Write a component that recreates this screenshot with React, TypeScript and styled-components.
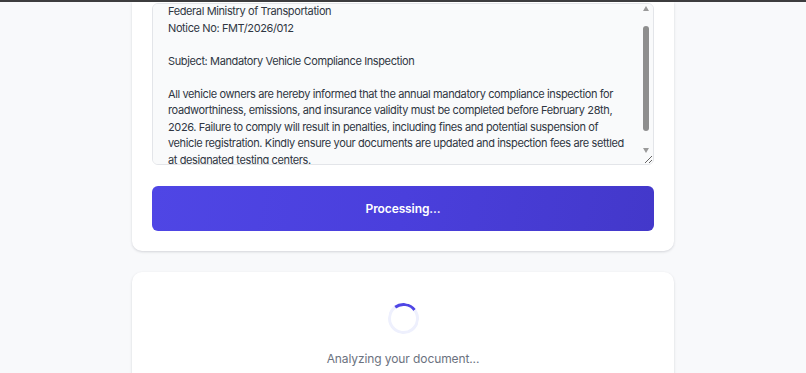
import React, { useLayoutEffect, useRef } from 'react';
import styled, { createGlobalStyle, keyframes } from 'styled-components';

const GlobalStyle = createGlobalStyle`
  html, body {
    margin: 0;
    padding: 0;
    height: 100%;
    overflow: hidden;
    background-color: #f8f9fb;
    font-family: Inter, 'Noto Sans', 'Liberation Sans', sans-serif;
  }
  * {
    box-sizing: border-box;
  }
`;

const TopEdge = styled.div`
  height: 2px;
  background-color: #3d3d3f;
`;

const Page = styled.main`
  display: flex;
  flex-direction: column;
  gap: 21px;
  width: 542px;
  margin: 0 auto;
`;

const Card = styled.section<{ $clipped?: boolean }>`
  display: flex;
  flex-direction: column;
  background-color: #ffffff;
  border-radius: ${(p) => (p.$clipped ? '0 0 10px 10px' : '10px')};
  box-shadow: 0 1px 3px rgba(15, 23, 42, 0.12), 0 1px 2px rgba(15, 23, 42, 0.04);
  padding: ${(p) => (p.$clipped ? '1px 20px 20px' : '31px 20px 20px')};
`;

const InputWrap = styled.div`
  position: relative;
`;

const NoticeInput = styled.textarea`
  display: block;
  width: 100%;
  height: 162px;
  padding: 12px 18px 12px 15px;
  border: 1px solid #e3e5e9;
  border-radius: 6px;
  background-color: #f9fafb;
  color: #2f3642;
  font-family: Inter, 'Noto Sans', 'Liberation Sans', sans-serif;
  font-size: 11px;
  letter-spacing: -0.38px;
  line-height: 16.5px;
  resize: vertical;
  overflow-y: scroll;
  outline: none;
  scrollbar-width: none;

  &::-webkit-scrollbar {
    display: none;
  }
`;

/* drawn scrollbar, the headless browser hides the native one */
const ScrollRail = styled.div`
  position: absolute;
  top: 1px;
  right: 1px;
  bottom: 1px;
  width: 14px;
  display: flex;
  flex-direction: column;
  align-items: center;
  pointer-events: none;
`;

const ArrowBox = styled.div<{ $down?: boolean }>`
  display: flex;
  align-items: center;
  justify-content: center;
  height: 9px;

  &::before {
    content: '';
    border-left: 3.5px solid transparent;
    border-right: 3.5px solid transparent;
    ${(p) =>
      p.$down ? 'border-top: 5px solid #9a9a9a;' : 'border-bottom: 5px solid #9a9a9a;'}
  }
`;

const Track = styled.div`
  flex: 1;
  width: 100%;
  display: flex;
  justify-content: center;
`;

const Thumb = styled.div`
  margin-top: 13px;
  width: 6px;
  height: 105px;
  border-radius: 3px;
  background-color: #8e8e8e;
`;

const CornerGap = styled.div`
  height: 9px;
`;

const SubmitButton = styled.button`
  margin-top: 21px;
  height: 45px;
  border: none;
  border-radius: 6px;
  background: linear-gradient(100deg, #4f46e5 0%, #4a3fdc 50%, #4338ca 100%);
  color: #ffffff;
  font-family: Inter, 'Noto Sans', 'Liberation Sans', sans-serif;
  font-size: 12px;
  font-weight: 600;
  letter-spacing: -0.1px;
  cursor: wait;
`;

const spin = keyframes`
  to { transform: rotate(360deg); }
`;

const Loader = styled.div`
  display: flex;
  flex-direction: column;
  align-items: center;
`;

const Spinner = styled.div`
  width: 31px;
  height: 31px;
  border: 3px solid #eef0fd;
  border-top-color: #4f46e5;
  border-radius: 50%;
  transform: rotate(8deg);
  animation: ${spin} 1s linear infinite paused;
`;

const LoaderText = styled.p`
  margin: 16px 0 0;
  color: #6b7280;
  font-size: 12px;
  letter-spacing: -0.1px;
  line-height: 18px;
`;

const notice = `Federal Ministry of Transportation
Notice No: FMT/2026/012

Subject: Mandatory Vehicle Compliance Inspection

All vehicle owners are hereby informed that the annual mandatory compliance inspection for roadworthiness, emissions, and insurance validity must be completed before February 28th, 2026. Failure to comply will result in penalties, including fines and potential suspension of vehicle registration. Kindly ensure your documents are updated and inspection fees are settled at designated testing centers.
`;

const App = () => {
  const inputRef = useRef<HTMLTextAreaElement>(null);

  useLayoutEffect(() => {
    if (inputRef.current) {
      inputRef.current.scrollTop = 13;
    }
  }, []);

  return (
    <>
      <GlobalStyle />
      <TopEdge />
      <Page>
        <Card $clipped>
          <InputWrap>
            <NoticeInput ref={inputRef} value={notice} readOnly />
            <ScrollRail>
              <ArrowBox />
              <Track>
                <Thumb />
              </Track>
              <ArrowBox $down />
              <CornerGap />
            </ScrollRail>
          </InputWrap>
          <SubmitButton type="button">Processing...</SubmitButton>
        </Card>
        <Card>
          <Loader>
            <Spinner />
            <LoaderText>Analyzing your document...</LoaderText>
          </Loader>
        </Card>
      </Page>
    </>
  );
};

export default App;
